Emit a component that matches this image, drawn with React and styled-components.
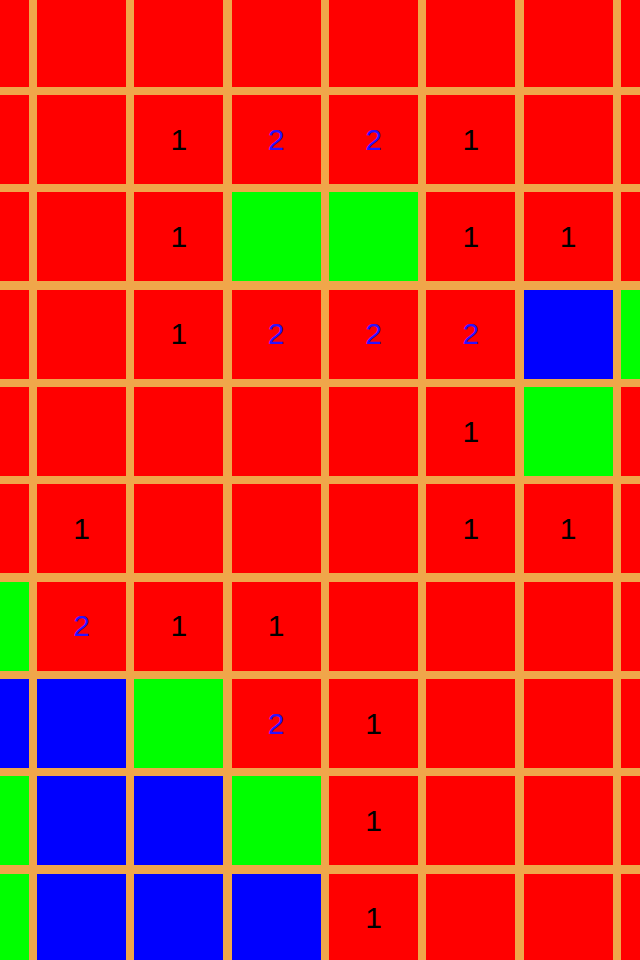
import React from "react";
import styled, { createGlobalStyle } from "styled-components";

const GlobalStyle = createGlobalStyle`
  html, body {
    margin: 0;
    padding: 0;
    background: #f0a64a;
  }
`;

const Board = styled.div`
  width: 640px;
  height: 960px;
  overflow: hidden;
  background: #f0a64a;
`;

const Grid = styled.div`
  display: grid;
  grid-template-columns: repeat(8, 89px);
  grid-auto-rows: 89px;
  gap: 8.33px;
  margin: -2.3px 0 0 -60.3px;
  width: max-content;
`;

const fills = {
  r: "#ff0000",
  g: "#00ff00",
  b: "#0000ff",
};

const Cell = styled.div`
  background: ${(p) => fills[p.$kind] || fills.r};
  display: flex;
  align-items: center;
  justify-content: center;
  font-family: "Liberation Sans", Arial, sans-serif;
  font-size: 30px;
  color: ${(p) => (p.$count === 2 ? "#2a12ff" : "#000000")};
`;

// r = red (hidden), g = green, b = blue, digits = revealed count
const rows = [
  "r r r r r r r r",
  "r r 1 2 2 1 r r",
  "r r 1 g g 1 1 r",
  "r r 1 2 2 2 b g",
  "r r r r r 1 g r",
  "r 1 r r r 1 1 r",
  "g 2 1 1 r r r r",
  "b b g 2 1 r r r",
  "g b b g 1 r r r",
  "g b b b 1 r r r",
];

const App = () => (
  <Board>
    <GlobalStyle />
    <Grid>
      {rows.map((row, y) =>
        row.split(" ").map((v, x) => {
          const n = Number(v);
          return (
            <Cell key={`${y}-${x}`} $kind={n ? "r" : v} $count={n}>
              {n ? n : null}
            </Cell>
          );
        })
      )}
    </Grid>
  </Board>
);

export default App;
